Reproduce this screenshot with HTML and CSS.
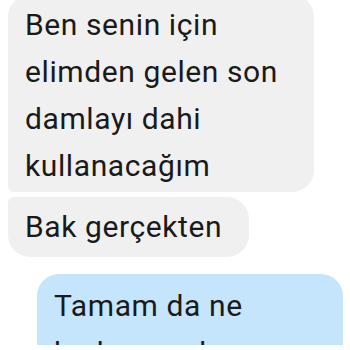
FILE: index.html
```html
<!DOCTYPE html>
<html lang="tr">
<head>
<meta charset="utf-8">
<link rel="stylesheet" href="styles.css">
</head>
<body>
<div class="thread">
  <div class="bubble in first">Ben senin için elimden gelen son damlayı dahi kullanacağım</div>
  <div class="bubble in second">Bak gerçekten</div>
  <div class="bubble out">Tamam da ne kadar ayarlarsın</div>
</div>
</body>
</html>
```
FILE: styles.css
```css
html, body {
  margin: 0;
  padding: 0;
  background: #ffffff;
  overflow: hidden;
}
.thread {
  width: 350px;
  height: 350px;
  display: flex;
  flex-direction: column;
  margin-top: -5px;
  font-family: Roboto, "Noto Sans", sans-serif;
  font-size: 30px;
  letter-spacing: 0.6px;
  line-height: 47px;
  color: #1a1a1a;
}
.bubble {
  max-width: 306px;
  box-sizing: border-box;
  padding: 6px 23px 7px 17px;
  border-radius: 22px;
}
.in {
  align-self: flex-start;
  margin-left: 8px;
  background: #f0f0f0;
}
.first {
  width: 306px;
  padding-bottom: 3px;
  border-radius: 22px 22px 22px 6px;
}
.second {
  margin-top: 5px;
  padding-right: 27px;
  border-radius: 6px 22px 22px 22px;
}
.out {
  align-self: flex-end;
  margin-right: 7px;
  margin-top: 17px;
  width: 306px;
  padding-top: 8px;
  background: #c5e5fd;
}
```
